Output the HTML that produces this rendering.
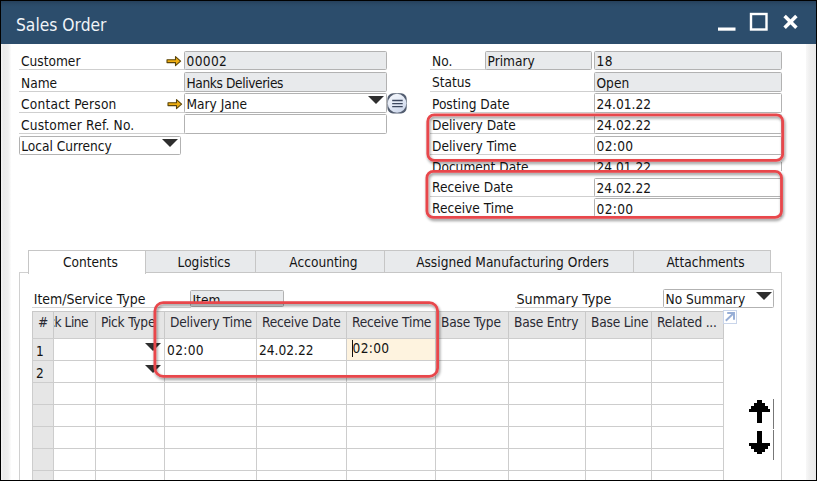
<!DOCTYPE html>
<html><head><meta charset="utf-8"><title>Sales Order</title>
<style>
html,body{margin:0;padding:0;}
body{width:817px;height:481px;position:relative;overflow:hidden;background:#fff;
 font-family:"DejaVu Sans Condensed","Liberation Sans",sans-serif;font-size:13.6px;color:#141414;}
div,span{box-sizing:border-box;}
.abs{position:absolute;}
#frame{position:absolute;left:0;top:0;width:817px;height:481px;border:1px solid #000;}
#lband{position:absolute;left:1px;top:44px;width:10px;height:436px;background:linear-gradient(90deg,#f4f4f4 0,#ebebeb 25%,#efefef 70%,#fcfcfc 100%);}
#rband{position:absolute;left:806px;top:44px;width:10px;height:436px;background:linear-gradient(90deg,#f8f8f8 0,#eeeeee 40%,#e9e9e9 100%);}
#title{position:absolute;left:1px;top:1px;width:815px;height:43px;background:linear-gradient(180deg,#253f5a 0,#2a4966 3px,#2c4d6c 6px,#2c4d6c 100%);}
#title .t{position:absolute;left:15px;top:12.5px;font-size:17.3px;color:#f1f4f8;line-height:22px;white-space:nowrap;}
.lbl{position:absolute;height:19px;border-bottom:1px solid #cfcfcf;white-space:nowrap;line-height:20px;padding-left:2px;}
.fld{position:absolute;height:19px;border:1px solid #b2b2b2;border-radius:1.5px;background:#fff;white-space:nowrap;line-height:19px;padding-left:1.5px;overflow:hidden;}
.ro{background:#e8eaec;}
.num{letter-spacing:.35px;}
.tri{position:absolute;width:0;height:0;border-left:8px solid transparent;border-right:8px solid transparent;border-top:8px solid #2e2e2e;}
.tab{position:absolute;top:250px;height:23px;border:1px solid #c6c6c6;background:#e8eaec;text-align:center;line-height:22px;white-space:nowrap;padding-left:7px;}
.tab.act{background:#fff;border-bottom:none;height:24px;}
#panel{position:absolute;left:19px;top:272px;width:763px;height:215px;border:1px solid #d0d0d0;border-bottom:none;}
.hl{position:absolute;border:2.6px solid #e2474b;border-radius:8px;box-shadow:1px 2px 3px rgba(0,0,0,.4);}
.th{position:absolute;top:311px;height:27px;background:#e5e5e5;border-right:1px solid #c9c9c9;border-top:1px solid #c9c9c9;line-height:21px;white-space:nowrap;overflow:hidden;color:#2a2a33;letter-spacing:-.2px;}
.vl{position:absolute;top:338px;width:1px;height:142px;background:#cdcdcd;}
.hline{position:absolute;left:32px;width:692px;height:1px;background:#cdcdcd;}
.cell{position:absolute;white-space:nowrap;line-height:22px;}
</style></head><body>
<div id="lband"></div><div id="rband"></div>
<div id="title"><span class="t">Sales Order</span>
<svg class="abs" style="left:710px;top:8px" width="100" height="28" viewBox="0 0 100 28">
<rect x="7" y="18.5" width="17.5" height="3.2" fill="#fff"/>
<rect x="40" y="5" width="15.5" height="15.5" fill="none" stroke="#fff" stroke-width="2.4"/>
<path d="M73.6 6.9 L85.4 18.8 M85.4 6.9 L73.6 18.8" stroke="#fff" stroke-width="3.5" fill="none"/>
</svg>
</div>
<div class="lbl" style="left:19px;top:51px;width:166px;height:19px;line-height:20px">Customer</div>
<div class="fld ro num" style="left:184px;top:51px;width:203px;height:19px;line-height:19px">00002</div>
<div class="lbl" style="left:19px;top:72px;width:166px;height:20px;line-height:22px">Name</div>
<div class="fld ro" style="left:184px;top:72px;width:203px;height:20px;line-height:21px"><span style="letter-spacing:-.38px">Hanks Deliveries</span></div>
<div class="lbl" style="left:19px;top:93px;width:166px;height:20px;line-height:22px"><span style="letter-spacing:.22px">Contact Person</span></div>
<div class="fld " style="left:184px;top:93px;width:203px;height:20px;line-height:21px">Mary Jane</div>
<div class="lbl" style="left:19px;top:114px;width:166px;height:20px;line-height:22px"><span style="letter-spacing:.2px">Customer Ref. No.</span></div>
<div class="fld " style="left:184px;top:114px;width:203px;height:20px;line-height:21px"></div>
<div class="fld" style="left:19px;top:136px;width:162px;padding-left:1.2px">Local Currency</div>
<div class="tri" style="left:162px;top:139px"></div>
<div class="tri" style="left:368px;top:96px"></div>
<svg class="abs" style="left:165px;top:54px" width="18" height="14" viewBox="0 0 18 14"><path d="M2 5.8 H10.5 V2.6 L15.6 7.1 L10.5 11.6 V8.6 H2 Z" fill="#efae12" stroke="#5a4408" stroke-width="1.1" stroke-linejoin="round"/></svg>
<svg class="abs" style="left:165.8px;top:97px" width="18" height="14" viewBox="0 0 18 14"><path d="M2 5.8 H10.5 V2.6 L15.6 7.1 L10.5 11.6 V8.6 H2 Z" fill="#efae12" stroke="#5a4408" stroke-width="1.1" stroke-linejoin="round"/></svg>
<svg class="abs" style="left:385px;top:91px" width="24" height="25" viewBox="385 91 24 25">
<defs><linearGradient id="g1" x1="0" y1="0" x2="0.6" y2="1"><stop offset="0" stop-color="#f7f9fd"/><stop offset="0.5" stop-color="#e6ecf7"/><stop offset="1" stop-color="#cfd9ec"/></linearGradient>
<filter id="b1"><feGaussianBlur stdDeviation="0.35"/></filter></defs>
<rect x="387.4" y="93.3" width="19.3" height="20.1" rx="5.6" fill="#525d70" filter="url(#b1)"/>
<ellipse cx="397.05" cy="103.35" rx="9.3" ry="9.5" fill="url(#g1)"/>
<path d="M392.2 100.5 H402.7 M392.2 103.55 H402.7 M392.2 106.55 H402.7" stroke="#3d485e" stroke-width="1.35"/>
</svg>
<div class="lbl" style="left:430px;top:51px;width:56px">No.</div>
<div class="fld ro" style="left:485px;top:51px;width:107px">Primary</div>
<div class="fld ro num" style="left:594px;top:51px;width:188px;height:19px;line-height:19px">18</div>
<div class="lbl" style="left:430px;top:72px;width:165px;height:20px;line-height:20px">Status</div>
<div class="fld ro" style="left:594px;top:72px;width:188px;height:20px;line-height:21px">Open</div>
<div class="lbl" style="left:430px;top:93px;width:165px;height:20px;line-height:22px">Posting Date</div>
<div class="fld " style="left:594px;top:93px;width:188px;height:20px;line-height:21px">24.01.22</div>
<div class="lbl" style="left:430px;top:114px;width:165px;height:20px;line-height:22px">Delivery Date</div>
<div class="fld " style="left:594px;top:114px;width:188px;height:20px;line-height:21px">24.02.22</div>
<div class="lbl" style="left:430px;top:136px;width:165px;height:19px;line-height:20px">Delivery Time</div>
<div class="fld num" style="left:594px;top:136px;width:188px;height:19px;line-height:19px">02:00</div>
<div class="abs" style="left:428px;top:162px;width:356px;height:9px;overflow:hidden">
 <div class="lbl" style="left:2px;top:-5px;width:165px;height:19px;line-height:20px">Document Date</div>
 <div class="fld " style="left:166px;top:-5px;width:188px;height:19px;line-height:19px">24.01.22</div>
</div>
<div class="lbl" style="left:430px;top:178px;width:165px;height:19px;line-height:19.0px">Receive Date</div>
<div class="fld " style="left:594px;top:178px;width:188px;height:19px;line-height:18.0px">24.02.22</div>
<div class="lbl" style="left:430px;top:198px;width:165px;height:19px;line-height:21.0px">Receive Time</div>
<div class="fld num" style="left:594px;top:198px;width:188px;height:19px;line-height:20.0px">02:00</div>
<div id="panel"></div>
<div class="tab act" style="left:28px;width:118px">Contents</div>
<div class="tab " style="left:145px;width:111px">Logistics</div>
<div class="tab " style="left:255px;width:130px">Accounting</div>
<div class="tab " style="left:384px;width:250px">Assigned Manufacturing Orders</div>
<div class="tab " style="left:633px;width:138px">Attachments</div>
<div class="lbl" style="left:32px;top:289px;width:159px;border-bottom-color:#d4d4d4;padding-left:1.7px;font-size:13.95px">Item/Service Type</div>
<div class="fld ro" style="left:190px;top:290px;width:94px;height:17px"><span style="position:relative;top:-1px;display:inline-block;height:11px;overflow:hidden;line-height:14px">Item</span></div>
<div class="lbl" style="left:515px;top:289px;width:148px;padding-left:1.5px;font-size:14.2px">Summary Type</div>
<div class="fld" style="left:663px;top:289px;width:111px">No Summary</div>
<div class="tri" style="left:755.5px;top:292px;border-left-width:8.5px;border-right-width:8.5px;border-top-width:8.5px"></div>
<div class="abs" style="left:32px;top:338px;width:22px;height:142px;background:#e6e6e6"></div>
<div class="abs" style="left:347px;top:339px;width:89px;height:21px;background:#fef3df"></div>
<div class="th" style="left:32px;width:22px;border-left:1px solid #c9c9c9;padding-left:5px">#</div>
<div class="th" style="left:54px;width:42px"><span style="margin-left:-8.5px;letter-spacing:-.5px">ick Line</span></div>
<div class="th" style="left:96px;width:69px;padding-left:5px">Pick Type</div>
<div class="th" style="left:165px;width:92px;padding-left:5px">Delivery Time</div>
<div class="th" style="left:257px;width:90px;padding-left:5px">Receive Date</div>
<div class="th" style="left:347px;width:89px;padding-left:5px">Receive Time</div>
<div class="th" style="left:436px;width:73px;padding-left:5px">Base Type</div>
<div class="th" style="left:509px;width:77px;padding-left:5px">Base Entry</div>
<div class="th" style="left:586px;width:66px;padding-left:5px">Base Line</div>
<div class="th" style="left:652px;width:72px;padding-left:5px">Related ...</div>
<div class="vl" style="left:32px"></div>
<div class="vl" style="left:53px"></div>
<div class="vl" style="left:95px"></div>
<div class="vl" style="left:164px"></div>
<div class="vl" style="left:256px"></div>
<div class="vl" style="left:346px"></div>
<div class="vl" style="left:435px"></div>
<div class="vl" style="left:508px"></div>
<div class="vl" style="left:585px"></div>
<div class="vl" style="left:651px"></div>
<div class="vl" style="left:723px"></div>
<div class="hline" style="top:338px"></div>
<div class="hline" style="top:360px"></div>
<div class="hline" style="top:382px"></div>
<div class="hline" style="top:404px"></div>
<div class="hline" style="top:426px"></div>
<div class="hline" style="top:448px"></div>
<div class="hline" style="top:470px"></div>
<div class="cell" style="left:36px;top:339.5px">1</div>
<div class="cell" style="left:36px;top:361.5px">2</div>
<div class="cell num" style="left:167px;top:339px">02:00</div>
<div class="cell" style="left:259px;top:339px">24.02.22</div>
<div class="cell num" style="left:352.5px;top:337px">02:00</div>
<div class="abs" style="left:352px;top:340px;width:1px;height:17px;background:#111"></div>
<div class="tri" style="left:145px;top:343px"></div>
<div class="tri" style="left:145px;top:365px"></div>

<svg class="abs" style="left:723px;top:310px" width="15" height="15" viewBox="0 0 15 15">
<rect x="0.5" y="0.5" width="13" height="13" fill="#fff" stroke="#c9d5ea"/>
<path d="M2.8 10.8 L10.8 3 M4.2 3 H11 V9.8" stroke="#97aed6" stroke-width="1.9" fill="none"/>
</svg>
<svg class="abs" style="left:745px;top:396px" width="34" height="68" viewBox="0 0 34 68" shape-rendering="crispEdges">
<g fill="#000">
<rect x="12" y="4" width="5" height="3"/><rect x="9" y="7" width="11" height="3"/><rect x="6" y="10" width="17" height="3"/><rect x="4" y="13" width="21" height="3"/><rect x="12" y="16" width="5" height="11"/>
<rect x="12" y="35" width="5" height="12"/><rect x="4" y="47" width="21" height="3"/><rect x="6" y="50" width="17" height="3"/><rect x="9" y="53" width="11" height="3"/><rect x="12" y="56" width="5" height="2"/>
</g>
<rect x="28" y="3" width="1" height="30" fill="#777"/><rect x="28" y="34" width="1" height="30" fill="#777"/>
</svg>
<svg class="abs" style="left:0;top:0" width="817" height="481" viewBox="0 0 817 481">
<defs><filter id="sh" x="-5%" y="-20%" width="110%" height="150%"><feGaussianBlur in="SourceAlpha" stdDeviation="1.8"/><feOffset dx="1.2" dy="2.2" result="o"/><feComponentTransfer><feFuncA type="linear" slope="0.45"/></feComponentTransfer><feMerge><feMergeNode/><feMergeNode in="SourceGraphic"/></feMerge></filter></defs>
<g fill="none" stroke="#e8464b" stroke-width="2.8" filter="url(#sh)">
<rect x="427.8" y="114.8" width="354.9" height="45.6" rx="6.4"/>
<rect x="426.9" y="171.4" width="354.6" height="45.9" rx="6.4"/>
<rect x="154.9" y="302.7" width="282.7" height="73.6" rx="8.3"/>
</g></svg>
<div id="frame"></div>
</body></html>
